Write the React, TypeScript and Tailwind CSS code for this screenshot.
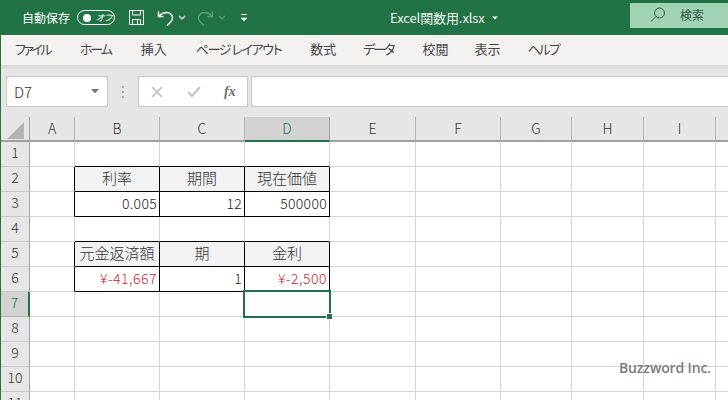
const cols = ["A", "B", "C", "D", "E", "F", "G", "H", "I", ""];
const colWidths = [45, 85, 85, 85, 86, 85, 71, 72, 72, 13];
const rows = [1, 2, 3, 4, 5, 6, 7, 8, 9, 10, 11];
const tabs = [
  { t: "ファイル", c: "tracking-[-2.5px]" },
  { t: "ホーム", c: "ml-[30px] tracking-[-2.2px]" },
  { t: "挿入", c: "ml-[30px]" },
  { t: "ページ レイアウト", c: "ml-[29px] tracking-[-1.4px]" },
  { t: "数式", c: "ml-[29px]" },
  { t: "データ", c: "ml-[27px] tracking-[-2px]" },
  { t: "校閲", c: "ml-[29px]" },
  { t: "表示", c: "ml-[26px]" },
  { t: "ヘルプ", c: "ml-[27px] tracking-[-2px]" },
];

type Cell = { t: string; kind: "head" | "num" | "red" };
const cells: Record<string, Cell> = {
  B2: { t: "利率", kind: "head" },
  C2: { t: "期間", kind: "head" },
  D2: { t: "現在価値", kind: "head" },
  B3: { t: "0.005", kind: "num" },
  C3: { t: "12", kind: "num" },
  D3: { t: "500000", kind: "num" },
  B5: { t: "元金返済額", kind: "head" },
  C5: { t: "期", kind: "head" },
  D5: { t: "金利", kind: "head" },
  B6: { t: "¥-41,667", kind: "red" },
  C6: { t: "1", kind: "num" },
  D6: { t: "¥-2,500", kind: "red" },
};

const tableRows = [2, 3, 5, 6];
const tableCols = ["B", "C", "D"];

function GridCell({ col, row }: { col: string; row: number }) {
  const data = cells[col + row];
  const blackRight = tableRows.includes(row) && ["A", "B", "C", "D"].includes(col);
  const blackBottom = tableCols.includes(col) && [1, 2, 3, 4, 5, 6].includes(row);
  const selected = col === "D" && row === 7;
  const kind = data?.kind;
  return (
    <div
      className={[
        "relative flex h-full items-center border-r border-b pb-[2px] font-light",
        blackRight ? "border-r-black" : "border-r-[#d4d4d4]",
        blackBottom ? "border-b-black" : "border-b-[#d4d4d4]",
        kind === "head" ? "justify-center bg-[#f2f2f2] text-[15px] text-[#333]" : "",
        kind === "num" ? "justify-end pr-[2px] text-[14px] tracking-[0.3px] text-[#222]" : "",
        kind === "red" ? "justify-end pr-[2px] text-[14px] tracking-[0.5px] text-[#cf1f2b]" : "",
      ].join(" ")}
    >
      {data?.t}
      {selected && (
        <div className="absolute -top-[2px] -left-[2px] z-10 h-[28px] w-[88px] border-2 border-[#217346]">
          <div className="absolute -right-[4px] -bottom-[4px] h-[7px] w-[7px] border border-white bg-[#217346]" />
        </div>
      )}
    </div>
  );
}

export default function App() {
  return (
    <div className="relative flex h-[400px] w-[728px] flex-col overflow-hidden border-l border-l-[#217346] bg-white font-['Noto_Sans_CJK_JP','Noto_Sans',sans-serif] [font-feature-settings:'palt']">
      {/* Title bar */}
      <div className="-ml-px flex h-[35px] shrink-0 items-center bg-[#217346] text-white">
        <span className="ml-[22px] text-[12px]">自動保存</span>
        <div className="ml-[7px] flex h-[15px] w-[38px] items-center rounded-full border border-white pl-[5px]">
          <div className="h-[8px] w-[8px] rounded-full bg-white" />
          <span className="ml-[5px] text-[9px] italic leading-none">オフ</span>
        </div>
        <svg className="ml-[13px]" width="17" height="17" viewBox="0 0 17 17" fill="none" stroke="#fff" strokeWidth="1">
          <path d="M1.5 1.5h14v14h-14z" />
          <path d="M4.5 1.5v4.5h8v-4.5" />
          <path d="M4.5 15.5v-5h8v5" />
          <path d="M9.5 11v4" />
        </svg>
        <svg className="ml-[12px]" width="17" height="18" viewBox="0 0 17 18" fill="none" stroke="#fff" strokeWidth="1.4">
          <path d="M1.5 2.500v5h5" />
          <path d="M2 7C4.500 4.500 6.500 3.500 9.500 3.500c3.500 0 6 2.500 6 5.500 0 3-2.500 5-5.500 7.500" />
        </svg>
        <svg className="ml-[4px]" width="8" height="5" viewBox="0 0 8 5" fill="none" stroke="#fff" strokeWidth="1.2">
          <path d="M1 1l3 3 3-3" />
        </svg>
        <svg className="ml-[11px]" width="17" height="18" viewBox="0 0 17 18" fill="none" stroke="#5f9d7d" strokeWidth="1.4">
          <path d="M15.500 2.500v5h-5" />
          <path d="M15 7C12.500 4.500 10.500 3.500 7.500 3.500c-3.500 0-6 2.500-6 5.500 0 3 2.500 5 5.500 7.500" />
        </svg>
        <svg className="ml-[4px]" width="8" height="5" viewBox="0 0 8 5" fill="none" stroke="#5f9d7d" strokeWidth="1.2">
          <path d="M1 1l3 3 3-3" />
        </svg>
        <svg className="ml-[14px]" width="8" height="9" viewBox="0 0 8 9" fill="none" stroke="#fff">
          <path d="M1 1.500h6" />
          <path d="M1 5l3 3 3-3z" fill="#fff" strokeWidth="0.6" />
        </svg>
        <span className="ml-[142px] text-[13px] tracking-[-0.1px] text-[#f2f2f2]">Excel関数用.xlsx</span>
        <svg className="ml-[7px]" width="6" height="4" viewBox="0 0 6 4" fill="#fff">
          <path d="M0 0.500h6l-3 3z" />
        </svg>
        <div className="mt-[-5px] ml-auto flex h-[25px] w-[98px] items-center bg-[#a0d3b4] pl-[20px] text-[#30593f]">
          <svg width="16" height="16" viewBox="0 0 16 16" fill="none" stroke="#2f5f45" strokeWidth="1">
            <circle cx="9.500" cy="6" r="5" />
            <path d="M6 9.500l-5 5" />
          </svg>
          <span className="ml-[14px] text-[12px]">検索</span>
        </div>
      </div>

      {/* Ribbon tabs */}
      <div className="flex h-[30px] shrink-0 items-center bg-[#f3f2f1] pb-[2px] pl-[14px] text-[13px] text-[#444]">
        {tabs.map((x) => (
          <span key={x.t} className={x.c}>
            {x.t}
          </span>
        ))}
      </div>

      {/* Formula bar */}
      <div className="flex h-[52px] shrink-0 items-start bg-gradient-to-b from-[#d6d6d6] to-[#e6e6e6] to-[10%] pt-[11px] pl-[5px]">
        <div className="flex h-[31px] w-[102px] items-center justify-between border border-[#c6c6c6] bg-white pr-[8px] pl-[7px] text-[15px] font-light text-[#333]">
          <span className="pt-[2px]">D7</span>
          <svg width="8" height="5" viewBox="0 0 8 5" fill="#777">
            <path d="M0 0h8L4 4.500z" />
          </svg>
        </div>
        <div className="ml-[14px] flex h-[31px] flex-col items-center justify-center gap-[3px]">
          <div className="h-[2px] w-[2px] bg-[#b0b0b0]" />
          <div className="h-[2px] w-[2px] bg-[#b0b0b0]" />
          <div className="h-[2px] w-[2px] bg-[#b0b0b0]" />
        </div>
        <div className="ml-[14px] flex h-[31px] w-[110px] items-center border border-[#c6c6c6] bg-white pl-[12px]">
          <svg width="12" height="12" viewBox="0 0 12 12" fill="none" stroke="#bdbdbd" strokeWidth="1.500">
            <path d="M1 1l10 10M11 1L1 11" />
          </svg>
          <svg className="ml-[24px]" width="14" height="12" viewBox="0 0 14 12" fill="none" stroke="#c4c4c4" strokeWidth="2">
            <path d="M1 6l4 4 8-9" />
          </svg>
          <span className="ml-[23px] font-['Liberation_Serif',serif] text-[14px] font-bold italic leading-none text-[#6e6e6e]">fx</span>
        </div>
        <div className="ml-[3px] h-[31px] flex-1 border border-r-0 border-[#c6c6c6] bg-white" />
      </div>

      {/* Sheet */}
      <div className="grid flex-1 grid-cols-[29px_45px_85px_85px_85px_86px_85px_71px_72px_72px_13px] grid-rows-[25px_25px_25px_25px_25px_25px_25px_25px_25px_25px_25px_25px] [font-feature-settings:normal]">
        {/* Header row */}
        <div className="flex h-full items-start justify-center border-r border-b-2 border-r-[#9f9f9f] border-b-[#9f9f9f] bg-[#e6e6e6] pt-[5px]">
          <svg width="17" height="17" viewBox="0 0 17 17" fill="#b4b4b4">
            <path d="M17 0v17H0z" />
          </svg>
        </div>
        {cols.map((c, i) => (
          <div
            key={c + i}
            className={[
              "flex h-full items-center justify-center border-r border-b-2 pb-[1px] text-[14px] font-light",
              c === "D" ? "border-r-[#9f9f9f] border-b-[#217346] bg-[#d2d2d2] text-[#217346]" : "border-r-[#b4b4b4] border-b-[#9f9f9f] bg-[#e6e6e6] text-[#333]",
            ].join(" ")}
            style={{ width: colWidths[i] }}
          >
            {c}
          </div>
        ))}

        {rows.map((r) => [
          <div
            key={"h" + r}
            className={[
              "flex h-full items-center justify-center border-b pb-[3px] text-[14px] font-light",
              r === 7 ? "border-r-2 border-r-[#217346] border-b-[#b4b4b4] bg-[#d2d2d2] text-[#217346]" : "border-r border-r-[#9f9f9f] border-b-[#c8c8c8] bg-[#e6e6e6] text-[#333]",
            ].join(" ")}
          >
            {r}
          </div>,
          ...cols.map((c, i) => <GridCell key={c + i + r} col={c} row={r} />),
        ])}
      </div>

      {/* Watermark */}
      <div className="absolute top-[357px] left-[618px] z-20 font-['Open_Sans',sans-serif] text-[14px] font-semibold tracking-[-0.15px] text-[#7d7d7d]">
        Buzzword Inc.
      </div>
    </div>
  );
}
